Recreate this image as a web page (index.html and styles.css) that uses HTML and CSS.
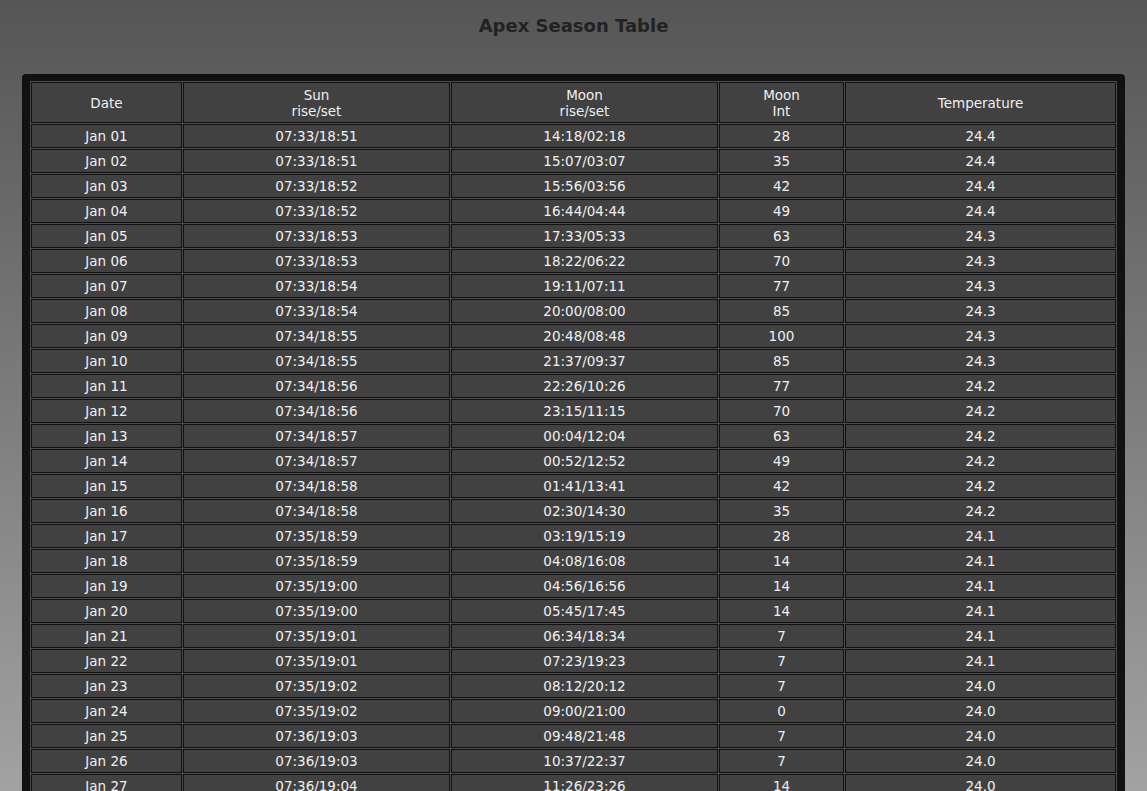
FILE: index.html
```html
<!DOCTYPE html>
<html lang="en">
<head>
<meta charset="utf-8">
<title>Apex Season Table</title>
<link rel="stylesheet" href="styles.css">
</head>
<body>
<h1 class="title">Apex Season Table</h1>
<div class="panel">
<table class="season">
<colgroup>
<col class="c-date"><col class="c-sun"><col class="c-moon"><col class="c-int"><col class="c-temp">
</colgroup>
<thead>
<tr><th>Date</th><th>Sun<br>rise/set</th><th>Moon<br>rise/set</th><th>Moon<br>Int</th><th>Temperature</th></tr>
</thead>
<tbody>
<tr><td>Jan 01</td><td>07:33/18:51</td><td>14:18/02:18</td><td>28</td><td>24.4</td></tr>
<tr><td>Jan 02</td><td>07:33/18:51</td><td>15:07/03:07</td><td>35</td><td>24.4</td></tr>
<tr><td>Jan 03</td><td>07:33/18:52</td><td>15:56/03:56</td><td>42</td><td>24.4</td></tr>
<tr><td>Jan 04</td><td>07:33/18:52</td><td>16:44/04:44</td><td>49</td><td>24.4</td></tr>
<tr><td>Jan 05</td><td>07:33/18:53</td><td>17:33/05:33</td><td>63</td><td>24.3</td></tr>
<tr><td>Jan 06</td><td>07:33/18:53</td><td>18:22/06:22</td><td>70</td><td>24.3</td></tr>
<tr><td>Jan 07</td><td>07:33/18:54</td><td>19:11/07:11</td><td>77</td><td>24.3</td></tr>
<tr><td>Jan 08</td><td>07:33/18:54</td><td>20:00/08:00</td><td>85</td><td>24.3</td></tr>
<tr><td>Jan 09</td><td>07:34/18:55</td><td>20:48/08:48</td><td>100</td><td>24.3</td></tr>
<tr><td>Jan 10</td><td>07:34/18:55</td><td>21:37/09:37</td><td>85</td><td>24.3</td></tr>
<tr><td>Jan 11</td><td>07:34/18:56</td><td>22:26/10:26</td><td>77</td><td>24.2</td></tr>
<tr><td>Jan 12</td><td>07:34/18:56</td><td>23:15/11:15</td><td>70</td><td>24.2</td></tr>
<tr><td>Jan 13</td><td>07:34/18:57</td><td>00:04/12:04</td><td>63</td><td>24.2</td></tr>
<tr><td>Jan 14</td><td>07:34/18:57</td><td>00:52/12:52</td><td>49</td><td>24.2</td></tr>
<tr><td>Jan 15</td><td>07:34/18:58</td><td>01:41/13:41</td><td>42</td><td>24.2</td></tr>
<tr><td>Jan 16</td><td>07:34/18:58</td><td>02:30/14:30</td><td>35</td><td>24.2</td></tr>
<tr><td>Jan 17</td><td>07:35/18:59</td><td>03:19/15:19</td><td>28</td><td>24.1</td></tr>
<tr><td>Jan 18</td><td>07:35/18:59</td><td>04:08/16:08</td><td>14</td><td>24.1</td></tr>
<tr><td>Jan 19</td><td>07:35/19:00</td><td>04:56/16:56</td><td>14</td><td>24.1</td></tr>
<tr><td>Jan 20</td><td>07:35/19:00</td><td>05:45/17:45</td><td>14</td><td>24.1</td></tr>
<tr><td>Jan 21</td><td>07:35/19:01</td><td>06:34/18:34</td><td>7</td><td>24.1</td></tr>
<tr><td>Jan 22</td><td>07:35/19:01</td><td>07:23/19:23</td><td>7</td><td>24.1</td></tr>
<tr><td>Jan 23</td><td>07:35/19:02</td><td>08:12/20:12</td><td>7</td><td>24.0</td></tr>
<tr><td>Jan 24</td><td>07:35/19:02</td><td>09:00/21:00</td><td>0</td><td>24.0</td></tr>
<tr><td>Jan 25</td><td>07:36/19:03</td><td>09:48/21:48</td><td>7</td><td>24.0</td></tr>
<tr><td>Jan 26</td><td>07:36/19:03</td><td>10:37/22:37</td><td>7</td><td>24.0</td></tr>
<tr><td>Jan 27</td><td>07:36/19:04</td><td>11:26/23:26</td><td>14</td><td>24.0</td></tr>
<tr><td>Jan 28</td><td>07:36/19:04</td><td>12:15/00:15</td><td>14</td><td>24.0</td></tr>
</tbody>
</table>
</div>
</body>
</html>
```

FILE: styles.css
```css
html {
  height: 100%;
  overflow: hidden;
}
body {
  margin: 0;
  height: 100%;
  background: linear-gradient(to bottom, #565656 0%, #5a5a5a 6%, #a2a2a2 100%);
  font-family: "DejaVu Sans", Verdana, sans-serif;
  overflow: hidden;
}
.title {
  margin: 16px 0 0;
  font-size: 18px;
  line-height: 20px;
  text-align: center;
  color: #222222;
  font-weight: bold;
}
.panel {
  margin: 38px 22px 0;
  padding: 7px 8px 7px 8px;
  background: #111111;
  border-radius: 4px;
}
.season {
  width: 100%;
  table-layout: fixed;
  border-collapse: separate;
  border-spacing: 1px;
  background: #4a4a4a;
  color: #f0f0f0;
  font-size: 13.5px;
}
.c-date { width: 151px; }
.c-sun { width: 267px; }
.c-moon { width: 267px; }
.c-int { width: 125px; }
.season th,
.season td {
  border: 1px solid #111111;
  background: #414141;
  text-align: center;
  padding: 0;
}
.season th {
  font-weight: normal;
  height: 39px;
  line-height: 16px;
}
.season td {
  height: 22px;
  line-height: 16px;
}
```
